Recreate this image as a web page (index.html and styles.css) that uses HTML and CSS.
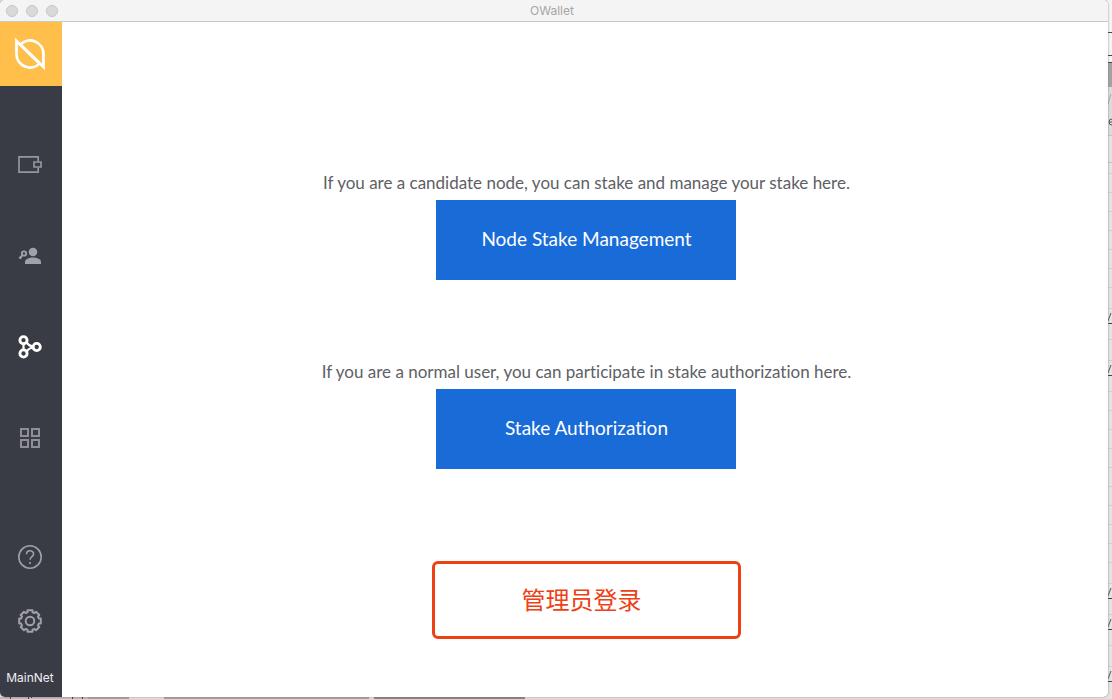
FILE: index.html
```html
<!DOCTYPE html>
<html lang="en">
<head>
<meta charset="utf-8">
<title>OWallet</title>
<link rel="stylesheet" href="styles.css">
</head>
<body>
<svg class="backdrop-right" width="5" height="699" viewBox="0 0 5 699" aria-hidden="true">
  <path fill="#f4f4f4" d="M0 0h5v62H0z"/>
  <path fill="#a3a3a3" d="M0 62h5v25H0z"/>
  <path fill="#dcdcdc" d="M0 87h5v48H0z"/>
  <path stroke="#c4c4c4" d="M0 135.500h5M0 162.500h5"/>
  <path stroke="#d2d2d2" d="M0 173.500h5M0 192.500h5M0 211.500h5M0 230.500h5M0 249.500h5M0 268.500h5M0 287.500h5M0 308.500h5M0 339.500h5M0 360.500h5M0 391.500h5M0 410.500h5M0 429.500h5M0 448.500h5M0 467.500h5M0 486.500h5M0 505.500h5M0 524.500h5M0 543.500h5M0 562.500h5M0 583.500h5M0 614.500h5M0 645.500h5M0 666.500h5"/>
  <path stroke="#444" d="M0 32.500h5M0 55.500h5M0 62.500h5M0 323.500h5M0 375.500h5M0 598.500h5M0 629.500h5M0 681.500h5"/>
  <path stroke="#555" d="M1 321l3-8M1 373l3-8M1 596l3-8M1 627l3-8M1 679l3-8"/>
  <path stroke="#aaa" d="M1 104l3-10"/>
  <path stroke="#555" fill="none" d="M5 119q-3 0-3 3t3 3M2 122h3"/>
</svg>
<svg class="backdrop-bottom" width="540" height="2" viewBox="0 0 540 2" aria-hidden="true">
  <path fill="#bdbdbd" d="M0 0h88v2H0z"/>
  <path fill="#a4a4a4" d="M88 0h41v2H88zM164 0h205v2H164z"/>
  <path fill="#858585" d="M374 0h151v2H374z"/>
  <path fill="#333" d="M10 0h1v2h-1zM28 0h1v2h-1zM31 0h1v1h-1zM72 0h1v2h-1zM82 0h1v2h-1z"/>
</svg>

<div class="window">
  <header class="titlebar">
    <div class="lights"><i class="light"></i><i class="light"></i><i class="light"></i></div>
    <h1 class="title">OWallet</h1>
  </header>
  <div class="body">
    <aside class="sidebar">
      <a class="logo" href="#" aria-label="Ontology">
        <svg width="32" height="34" viewBox="0 0 32 34" fill="none" stroke="#fff" stroke-width="2.800">
          <path d="M2.500 4V17A13.500 13.500 0 0 0 25.700 26.400z"/>
          <path d="M29.500 30V17A13.500 13.500 0 0 0 6.300 7.600z"/>
        </svg>
      </a>
      <nav class="nav">
        <button class="icon" type="button" aria-label="Wallets">
          <svg width="24" height="24" viewBox="0 0 24 24" fill="none" stroke="#96979c" stroke-width="1.700">
            <path d="M20.200 8.500V3.800H1V19.200H20.200V15"/><path d="M16 9h7v5h-7z"/>
          </svg>
        </button>
        <button class="icon" type="button" aria-label="Identity">
          <svg width="24" height="24" viewBox="0 0 24 24">
            <circle cx="15" cy="8" r="4.300" fill="#a1a2a7"/>
            <path d="M7 20v-2c0-3 4-4.600 8-4.600s8 1.600 8 4.600v2z" fill="#a1a2a7"/>
            <g fill="none" stroke="#a1a2a7" stroke-width="1.800"><circle cx="6" cy="9.500" r="2.200"/><path d="M4.400 11.200L1.200 14.400M2.200 13.200l1.300 1.300"/></g>
          </svg>
        </button>
        <button class="icon" type="button" aria-label="Node stake">
          <svg width="24" height="24" viewBox="0 0 24 24" fill="none" stroke="#fff" stroke-width="2.900">
            <circle cx="5.500" cy="5.200" r="3.600"/><circle cx="5.500" cy="18.500" r="3.600"/><circle cx="18.700" cy="12" r="3.600"/>
            <path stroke-width="2.200" d="M5.500 9v6M8.500 7.300q2.500 3.700 6.500 4.200M8.500 16.500q2.500-3.500 6.500-4"/>
          </svg>
        </button>
        <button class="icon" type="button" aria-label="Apps">
          <svg width="24" height="24" viewBox="0 0 24 24" fill="none" stroke="#8e8f94" stroke-width="2">
            <path d="M3 3h7v7H3zM14 3h7v7h-7zM3 14h7v7H3zM14 14h7v7h-7z"/>
          </svg>
        </button>
      </nav>
      <div class="tools">
        <button class="icon" type="button" aria-label="Help">
          <svg width="24" height="24" viewBox="0 0 24 24" fill="none" stroke="#a0a1a6" stroke-width="1.600">
            <circle cx="12" cy="12" r="11.200"/><path d="M8.500 9.300C8.500 4.500 15.600 4.800 15.600 8.900C15.600 11.500 12 11.700 12 14.800M12 17v1.900"/>
          </svg>
        </button>
        <button class="icon" type="button" aria-label="Settings">
          <svg width="24" height="24" viewBox="0 0 24 24" fill="none" stroke="#a0a1a6" stroke-width="2">
            <circle cx="12" cy="12" r="4.300"/>
            <path stroke-linejoin="round" d="M9.500 1.200h5V3.200l2 .8L18 2.700 21.300 6 20 7.500l.8 2h2v5h-2l-.8 2L21.300 18 18 21.300 16.500 20l-2 .8v2h-5v-2l-2-.8L6 21.300 2.700 18 4 16.500l-.8-2h-2v-5h2l.8-2L2.700 6 6 2.700 7.500 4l2-.8z"/>
          </svg>
        </button>
      </div>
      <p class="network">MainNet</p>
    </aside>
    <main class="content">
      <section class="option">
        <p class="hint">If you are a candidate node, you can stake and manage your stake here.</p>
        <button class="primary" type="button">Node Stake Management</button>
      </section>
      <section class="option">
        <p class="hint">If you are a normal user, you can participate in stake authorization here.</p>
        <button class="primary" type="button">Stake Authorization</button>
      </section>
      <button class="admin" type="button" lang="zh-CN">管理员登录</button>
    </main>
  </div>
</div>
</body>
</html>
```
FILE: styles.css
```css
* { box-sizing: border-box; }

body {
  margin: 0;
  min-height: 100vh;
  padding: 0 4px 2px 0;
  display: flex;
  background: #e4e4e4;
  font-family: Lato, "Noto Sans CJK SC", sans-serif;
  font-variant-ligatures: none;
}

p, h1 { margin: 0; }
button { font: inherit; font-variant-ligatures: none; border: 0; padding: 0; cursor: pointer; }

.backdrop-right { position: absolute; top: 0; right: 0; }
.backdrop-bottom { position: absolute; bottom: 0; left: 0; }

.window {
  position: relative;
  flex: 1;
  display: flex;
  flex-direction: column;
  background: #fff;
  border-radius: 5px;
  overflow: hidden;
  box-shadow: 0 0 2px #777;
}

.titlebar {
  display: grid;
  grid-template-columns: 1fr auto 1fr;
  align-items: center;
  height: 22px;
  padding: 0 10px 0 6px;
  background: #f4f4f4;
  border-bottom: 1px solid #c9c9c9;
}

.lights { display: flex; gap: 8px; }
.light {
  width: 12px;
  height: 12px;
  border: 1px solid #c6c6c6;
  border-radius: 50%;
  background: #d9d9d9;
}

.title {
  font: 400 12px/20px Inter, sans-serif;
  color: #a6a6a6;
}

.body { flex: 1; display: flex; }

.sidebar {
  width: 62px;
  display: flex;
  flex-direction: column;
  align-items: center;
  padding-bottom: 11px;
  background: #393b45;
}

.logo {
  align-self: stretch;
  height: 64px;
  display: flex;
  align-items: center;
  justify-content: center;
  padding-right: 2px;
  background: #ffbf4a;
}

.nav, .tools { display: flex; flex-direction: column; padding-right: 2px; }
.nav { gap: 67px; padding-top: 67px; }
.tools { gap: 40px; margin-top: auto; padding-bottom: 37px; }

.icon { width: 24px; height: 24px; background: none; }
.icon svg { display: block; }

.network {
  padding-right: 2px;
  font: 400 12px/16px Inter, sans-serif;
  color: #f0f0f2;
}

.content {
  flex: 1;
  display: flex;
  flex-direction: column;
  align-items: center;
  padding: 149px 0 58px 3px;
}

.option {
  display: flex;
  flex-direction: column;
  align-items: center;
  gap: 6px;
  margin-bottom: 80px;
}

.hint { font-size: 17px; line-height: 23px; color: #5e6065; }

.primary {
  width: 300px;
  height: 80px;
  padding-bottom: 4px;
  background: #196bd8;
  color: #fff;
  font-size: 19px;
}

.admin {
  width: 309px;
  height: 78px;
  margin-top: 12px;
  padding: 0 10px 2px 0;
  border: 3px solid #ee4015;
  border-radius: 6px;
  background: #fff;
  color: #ee4015;
  font: 400 24px/32px "Noto Sans CJK SC", sans-serif;
}
```
